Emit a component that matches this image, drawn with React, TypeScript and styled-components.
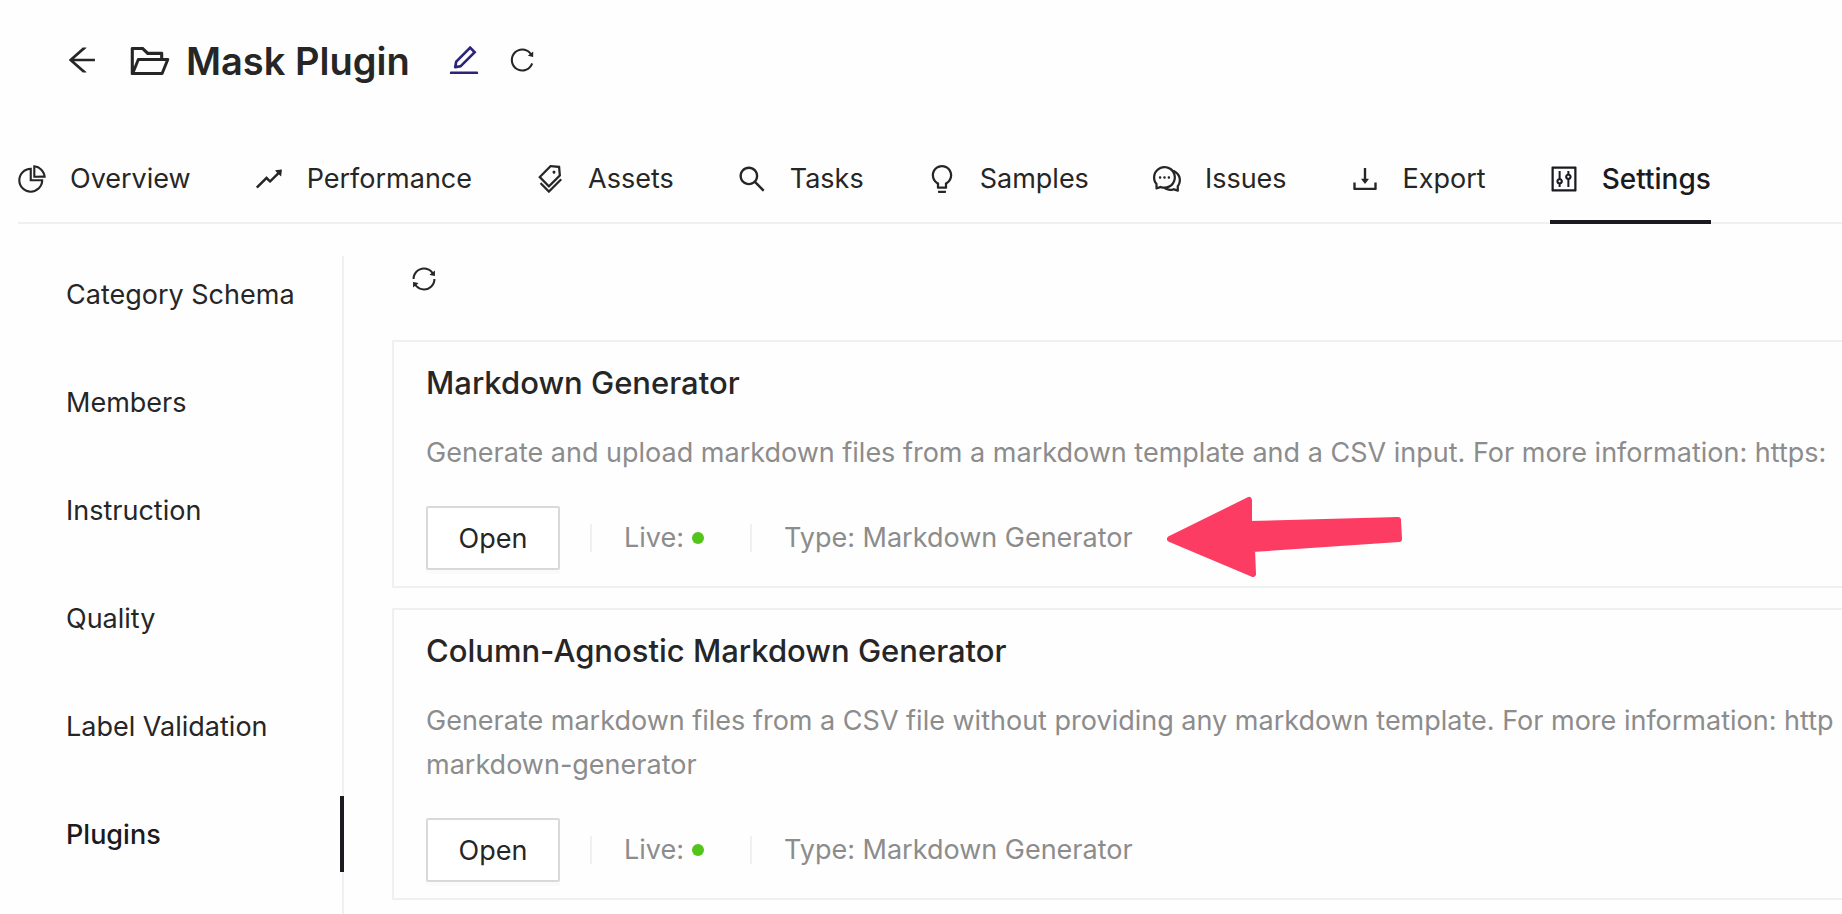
import React from "react";
import styled, { createGlobalStyle } from "styled-components";
import type { IconType } from "react-icons";
import {
  AiOutlineArrowLeft,
  AiOutlineBulb,
  AiOutlineComment,
  AiOutlineControl,
  AiOutlineDownload,
  AiOutlineEdit,
  AiOutlineFolderOpen,
  AiOutlinePieChart,
  AiOutlineReload,
  AiOutlineRise,
  AiOutlineSearch,
  AiOutlineSync,
  AiOutlineTags,
} from "react-icons/ai";

const color = {
  text: "#262626",
  active: "#1a1a20",
  muted: "#8c8c8c",
  line: "#f0f0f0",
  control: "#d9d9d9",
  edit: "#2b2478",
  live: "#52c41a",
  pointer: "#fc3c62",
};

const GlobalStyle = createGlobalStyle`
  * { box-sizing: border-box; }
  body {
    margin: 0;
    background: #fefefe;
    color: ${color.text};
    font: 400 27px/44px Inter, "Liberation Sans", sans-serif;
    overflow-x: hidden;
  }
`;

const Page = styled.div`
  display: flex;
  flex-direction: column;
  height: 100vh;
  overflow: hidden;
`;

const Header = styled.header`
  display: flex;
  align-items: center;
  padding: 28px 64px 0;
`;

const IconButton = styled.button<{ $size: number; $tint?: string }>`
  display: flex;
  padding: 0;
  border: 0;
  background: none;
  color: ${(p) => p.$tint ?? color.text};
  font-size: ${(p) => p.$size}px;
  cursor: pointer;
`;

const Title = styled.h1`
  display: flex;
  align-items: center;
  gap: 14px;
  margin: 0 36px 0 28px;
  padding-top: 2px;
  font-size: 38px;
  font-weight: 600;
  line-height: 62px;
  white-space: nowrap;

  svg {
    font-size: 44px;
  }
`;

const HeaderActions = styled.div`
  display: flex;
  align-items: center;
  gap: 26px;
`;

const Tabs = styled.nav`
  display: flex;
  gap: 64px;
  margin: 40px 0 0 18px;
  box-shadow: inset 0 -2px ${color.line};
`;

const Tab = styled.a<{ $active: boolean }>`
  display: flex;
  align-items: center;
  gap: 24px;
  padding: 25px 0 19px;
  border-bottom: 4px solid ${(p) => (p.$active ? color.active : "transparent")};
  color: ${(p) => (p.$active ? color.active : color.text)};
  font-size: ${(p) => (p.$active ? 28 : 27)}px;
  font-weight: ${(p) => (p.$active ? 500 : 400)};
  text-decoration: none;
  white-space: nowrap;

  svg {
    margin: 0 -2px;
    font-size: 32px;
  }
`;

const Body = styled.div`
  display: flex;
  flex: 1;
  min-height: 0;
  padding-top: 32px;
`;

const Sidebar = styled.nav`
  display: flex;
  flex-direction: column;
  flex: none;
  gap: 32px;
  width: 344px;
  box-shadow: inset -2px 0 ${color.line};
`;

const SideLink = styled.a<{ $active: boolean }>`
  padding: 17px 24px 15px 66px;
  border-right: 4px solid ${(p) => (p.$active ? color.active : "transparent")};
  color: ${(p) => (p.$active ? color.active : color.text)};
  font-weight: ${(p) => (p.$active ? 500 : 400)};
  text-decoration: none;
`;

const Content = styled.main`
  flex: 1;
  min-width: 0;
  padding: 8px 0 0 48px;
`;

const Toolbar = styled.div`
  display: flex;
  padding: 1px 18px 47px;
`;

const CardList = styled.div`
  display: flex;
  flex-direction: column;
  gap: 20px;
`;

const Card = styled.article`
  position: relative;
  padding: 16px 0 16px 32px;
  border: 2px solid ${color.line};
  border-right: 0;
  border-radius: 2px 0 0 2px;
  overflow: hidden;
`;

const CardTitle = styled.h2`
  margin: 0 0 23px;
  font-size: 31px;
  font-weight: 500;
  line-height: 50px;
`;

const Description = styled.p`
  margin: 0 0 31px;
  color: ${color.muted};
  white-space: pre;
`;

const Meta = styled.div`
  display: flex;
  align-items: center;
  color: ${color.muted};
  white-space: nowrap;
`;

const OpenButton = styled.button`
  width: 134px;
  height: 64px;
  padding: 1px 0 0;
  border: 2px solid ${color.control};
  border-radius: 2px;
  background: #fff;
  box-shadow: 0 4px 0 rgba(0, 0, 0, 0.016);
  color: ${color.text};
  font: inherit;
  cursor: pointer;
`;

const Divider = styled.span`
  width: 2px;
  height: 28px;
  margin: 0 32px 0 30px;
  background: ${color.line};
`;

const Live = styled.span`
  display: flex;
  align-items: center;
  gap: 8px;
  margin-right: 16px;
`;

const Dot = styled.span`
  width: 12px;
  height: 12px;
  border-radius: 50%;
  background: ${color.live};
`;

const Pointer = styled.svg`
  position: absolute;
  top: 147px;
  left: 768px;
  width: 250px;
  height: 90px;
`;

const tabs: { label: string; icon: IconType }[] = [
  { label: "Overview", icon: AiOutlinePieChart },
  { label: "Performance", icon: AiOutlineRise },
  { label: "Assets", icon: AiOutlineTags },
  { label: "Tasks", icon: AiOutlineSearch },
  { label: "Samples", icon: AiOutlineBulb },
  { label: "Issues", icon: AiOutlineComment },
  { label: "Export", icon: AiOutlineDownload },
  { label: "Settings", icon: AiOutlineControl },
];

const sections = [
  "Category Schema",
  "Members",
  "Instruction",
  "Quality",
  "Label Validation",
  "Plugins",
];

const plugins = [
  {
    name: "Markdown Generator",
    description:
      "Generate and upload markdown files from a markdown template and a CSV input. For more information: https:",
    pointed: true,
  },
  {
    name: "Column-Agnostic Markdown Generator",
    description:
      "Generate markdown files from a CSV file without providing any markdown template. For more information: http\nmarkdown-generator",
    pointed: false,
  },
];

export default function App() {
  return (
    <Page>
      <GlobalStyle />
      <Header>
        <IconButton $size={36} aria-label="Back">
          <AiOutlineArrowLeft />
        </IconButton>
        <Title>
          <AiOutlineFolderOpen />
          Mask Plugin
        </Title>
        <HeaderActions>
          <IconButton $size={36} $tint={color.edit} aria-label="Edit name">
            <AiOutlineEdit />
          </IconButton>
          <IconButton $size={28} aria-label="Reload project">
            <AiOutlineReload />
          </IconButton>
        </HeaderActions>
      </Header>
      <Tabs aria-label="Project">
        {tabs.map(({ label, icon: Icon }) => (
          <Tab key={label} href="#" $active={label === "Settings"}>
            <Icon />
            {label}
          </Tab>
        ))}
      </Tabs>
      <Body>
        <Sidebar aria-label="Settings">
          {sections.map((label) => (
            <SideLink key={label} href="#" $active={label === "Plugins"}>
              {label}
            </SideLink>
          ))}
        </Sidebar>
        <Content>
          <Toolbar>
            <IconButton $size={28} aria-label="Refresh plugins">
              <AiOutlineSync />
            </IconButton>
          </Toolbar>
          <CardList>
            {plugins.map((plugin) => (
              <Card key={plugin.name}>
                <CardTitle>{plugin.name}</CardTitle>
                <Description>{plugin.description}</Description>
                <Meta>
                  <OpenButton>Open</OpenButton>
                  <Divider />
                  <Live>
                    Live:
                    <Dot />
                  </Live>
                  <Divider />
                  Type: Markdown Generator
                </Meta>
                {plugin.pointed && (
                  <Pointer viewBox="0 0 250 90" aria-hidden="true">
                    <path
                      d="M8 50L87 11V35L236 31L237 50L90 60L91 85Z"
                      fill={color.pointer}
                      stroke={color.pointer}
                      strokeWidth="6"
                      strokeLinejoin="round"
                    />
                  </Pointer>
                )}
              </Card>
            ))}
          </CardList>
        </Content>
      </Body>
    </Page>
  );
}
